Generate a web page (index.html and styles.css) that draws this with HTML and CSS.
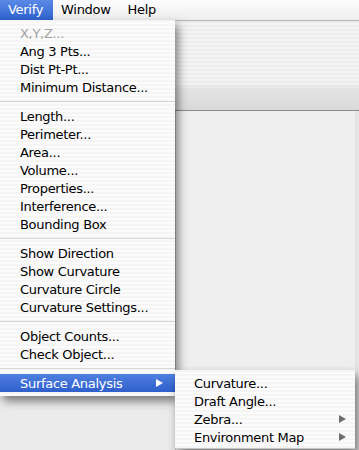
FILE: index.html
```html
<!DOCTYPE html>
<html lang="en">
<head>
    <meta charset="UTF-8">
    <meta name="viewport" content="width=device-width, initial-scale=1.0">
    <title>Verify menu</title>
    <link rel="stylesheet" href="styles.css">
</head>
<body>
<div class="screen">
    <div class="menubar">
        <span class="menu-title active">Verify</span>
        <span class="menu-title">Window</span>
        <span class="menu-title">Help</span>
    </div>

    <div class="window">
        <div class="toolbar"></div>
        <div class="content">
            <div class="sidebar"></div>
            <div class="main"></div>
        </div>
    </div>

    <ul class="menu verify-menu">
        <li class="disabled">X,Y,Z...</li>
        <li>Ang 3 Pts...</li>
        <li>Dist Pt-Pt...</li>
        <li>Minimum Distance...</li>
        <li class="separator"></li>
        <li>Length...</li>
        <li>Perimeter...</li>
        <li>Area...</li>
        <li>Volume...</li>
        <li>Properties...</li>
        <li>Interference...</li>
        <li>Bounding Box</li>
        <li class="separator"></li>
        <li>Show Direction</li>
        <li>Show Curvature</li>
        <li>Curvature Circle</li>
        <li>Curvature Settings...</li>
        <li class="separator"></li>
        <li>Object Counts...</li>
        <li>Check Object...</li>
        <li class="separator"></li>
        <li class="selected has-sub">Surface Analysis <span class="arrow"></span></li>
    </ul>

    <ul class="menu sub-menu">
        <li>Curvature...</li>
        <li>Draft Angle...</li>
        <li class="has-sub">Zebra... <span class="arrow"></span></li>
        <li class="has-sub">Environment Map <span class="arrow"></span></li>
    </ul>
</div>
</body>
</html>
```

FILE: styles.css
```css
body {
    margin: 0;
    font-family: "Lucida Grande", "DejaVu Sans", sans-serif;
    font-size: 13px;
    letter-spacing: -0.3px;
    color: #000;
    background-color: #ececec;
}

.screen {
    position: relative;
    width: 359px;
    height: 450px;
    overflow: hidden;
}

/* top menu bar */
.menubar {
    display: flex;
    height: 20px;
    line-height: 20px;
    background: linear-gradient(to bottom, #fdfdfd, #eeeeee);
}

.menu-title {
    padding: 0 9px 0 8px;
}

.menu-title.active {
    padding-right: 10px;
    color: #fff;
    background: linear-gradient(to bottom, #5a8ae6, #2f62cf);
}

/* window behind the menus */
.window {
    display: flex;
    flex-direction: column;
    height: 430px;
}

.toolbar {
    height: 89px;
    border-top: 1px solid #b5b5b5;
    border-bottom: 1px solid #8c8c8c;
    background:
        linear-gradient(to bottom, rgba(0, 0, 0, 0) 70%, #e2e2e2 78%, #d9d9d9 100%),
        repeating-linear-gradient(to bottom, #ececec 0 2px, #f3f3f3 2px 4px);
}

.content {
    flex: 1;
    display: flex;
}

.sidebar {
    width: 175px;
    background-color: #ebebeb;
    border-right: 1px solid #c4c4c4;
}

.main {
    flex: 1;
    background-color: #efefef;
    border-right: 4px solid #e4e4e4;
}

/* drop-down menus */
.menu {
    position: absolute;
    margin: 0;
    padding: 4px 0;
    list-style: none;
    background: repeating-linear-gradient(to bottom, #f5f5f5 0 2px, #fbfbfb 2px 4px);
    box-shadow: 3px 5px 9px rgba(0, 0, 0, 0.5);
}

.verify-menu {
    top: 20px;
    left: 0;
    width: 175px;
}

.sub-menu {
    top: 370px;
    left: 175px;
    width: 180px;
    padding-bottom: 2px;
    border-bottom: 1px solid #c8c8c8;
}

.menu li {
    display: flex;
    align-items: center;
    justify-content: space-between;
    height: 18px;
    padding: 0 12px 0 20px;
    white-space: nowrap;
}

.sub-menu li {
    padding: 0 9px 0 19px;
}

.menu li.disabled {
    color: #a3a3a3;
}

.menu li.separator {
    height: 11px;
    padding: 0;
    background: linear-gradient(to bottom, transparent 5px, #d6d6d6 5px, #d6d6d6 6px, transparent 6px);
}

.menu li.selected {
    color: #fff;
    background: linear-gradient(to bottom, #4f7fe0, #2e5fcc);
}

.arrow {
    width: 0;
    height: 0;
    border-top: 4.5px solid transparent;
    border-bottom: 4.5px solid transparent;
    border-left: 7px solid #6e6e6e;
}

.selected .arrow {
    border-left-color: #fff;
}
```
